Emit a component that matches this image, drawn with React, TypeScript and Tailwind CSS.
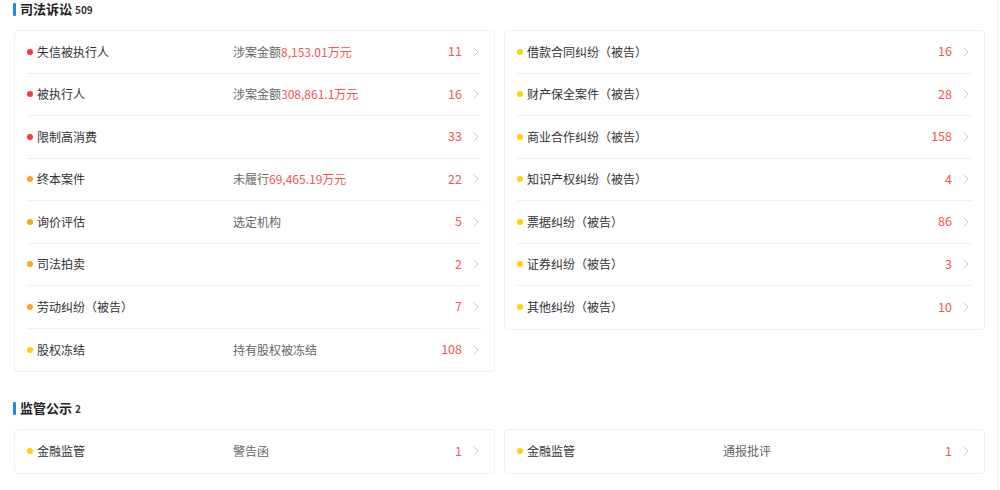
import React from 'react';

type Row = {
  label: string;
  dot: 'red' | 'orange' | 'yellow';
  prefix?: string;
  amount?: string;
  count: number;
};

const dotClass = {
  red: 'bg-[#f23b3b]',
  orange: 'bg-[#fba51a]',
  yellow: 'bg-[#ffd200]',
};

const leftRows: Row[] = [
  { label: '失信被执行人', dot: 'red', prefix: '涉案金额', amount: '8,153.01万元', count: 11 },
  { label: '被执行人', dot: 'red', prefix: '涉案金额', amount: '308,861.1万元', count: 16 },
  { label: '限制高消费', dot: 'red', count: 33 },
  { label: '终本案件', dot: 'orange', prefix: '未履行', amount: '69,465.19万元', count: 22 },
  { label: '询价评估', dot: 'orange', prefix: '选定机构', count: 5 },
  { label: '司法拍卖', dot: 'orange', count: 2 },
  { label: '劳动纠纷（被告）', dot: 'orange', count: 7 },
  { label: '股权冻结', dot: 'yellow', prefix: '持有股权被冻结', count: 108 },
];

const rightRows: Row[] = [
  { label: '借款合同纠纷（被告）', dot: 'yellow', count: 16 },
  { label: '财产保全案件（被告）', dot: 'yellow', count: 28 },
  { label: '商业合作纠纷（被告）', dot: 'yellow', count: 158 },
  { label: '知识产权纠纷（被告）', dot: 'yellow', count: 4 },
  { label: '票据纠纷（被告）', dot: 'yellow', count: 86 },
  { label: '证券纠纷（被告）', dot: 'yellow', count: 3 },
  { label: '其他纠纷（被告）', dot: 'yellow', count: 10 },
];

function Chevron() {
  return (
    <svg width="6" height="10" viewBox="0 0 6 10" fill="none" className="ml-[11px] mr-[3px] shrink-0">
      <polyline points="1,1 5,5 1,9" stroke="#c9c9c9" strokeWidth="1" strokeLinecap="round" strokeLinejoin="round" />
    </svg>
  );
}

function ItemRow({ row, last }: { row: Row; last?: boolean }) {
  return (
    <div
      className={`mx-[12px] h-[42.5px] grid grid-cols-[206px_1fr_auto_auto] items-center ${
        last ? '' : 'border-b border-[#f0f0f0]'
      }`}
    >
      <div className="flex items-center">
        <span className={`w-[6px] h-[6px] rounded-full ${dotClass[row.dot]}`} />
        <span className="ml-[4px] text-[12px] text-[#333]">{row.label}</span>
      </div>
      <div className="text-[12px] text-[#666]">
        {row.prefix}
        {row.amount && <span className="text-[#f25555]">{row.amount}</span>}
      </div>
      <span className="text-[12.5px] text-[#f25555]">{row.count}</span>
      <Chevron />
    </div>
  );
}

function Card({ rows }: { rows: Row[] }) {
  return (
    <div className="border border-[#f0f0f0] rounded-[4px] bg-white self-start">
      {rows.map((r, i) => (
        <ItemRow key={r.label + i} row={r} last={i === rows.length - 1} />
      ))}
    </div>
  );
}

function SectionTitle({ title, count }: { title: string; count: number }) {
  return (
    <div className="flex items-center h-[18px] pl-[13px]">
      <span className="w-[3px] h-[13px] bg-[#1e88f5] rounded-[1px]" />
      <span className="ml-[4px] text-[13px] font-bold text-[#222]">{title}</span>
      <span className="ml-[3px] text-[10px] font-bold text-[#333]">{count}</span>
    </div>
  );
}

export default function App() {
  return (
    <main
      className="min-h-screen w-[998px] bg-white border-r border-[#f2f2f2]"
      style={{ fontFamily: '"Noto Sans CJK SC", "Noto Sans", sans-serif' }}
    >
      <SectionTitle title="司法诉讼" count={509} />
      <div className="grid grid-cols-2 gap-[9px] w-[971px] ml-[14px] mt-[12px]">
        <Card rows={leftRows} />
        <Card rows={rightRows} />
      </div>

      <div className="mt-[27px]">
        <SectionTitle title="监管公示" count={2} />
      </div>
      <div className="grid grid-cols-2 gap-[9px] w-[971px] ml-[14px] mt-[12px]">
        <Card rows={[{ label: '金融监管', dot: 'yellow', prefix: '警告函', count: 1 }]} />
        <Card rows={[{ label: '金融监管', dot: 'yellow', prefix: '通报批评', count: 1 }]} />
      </div>
    </main>
  );
}
